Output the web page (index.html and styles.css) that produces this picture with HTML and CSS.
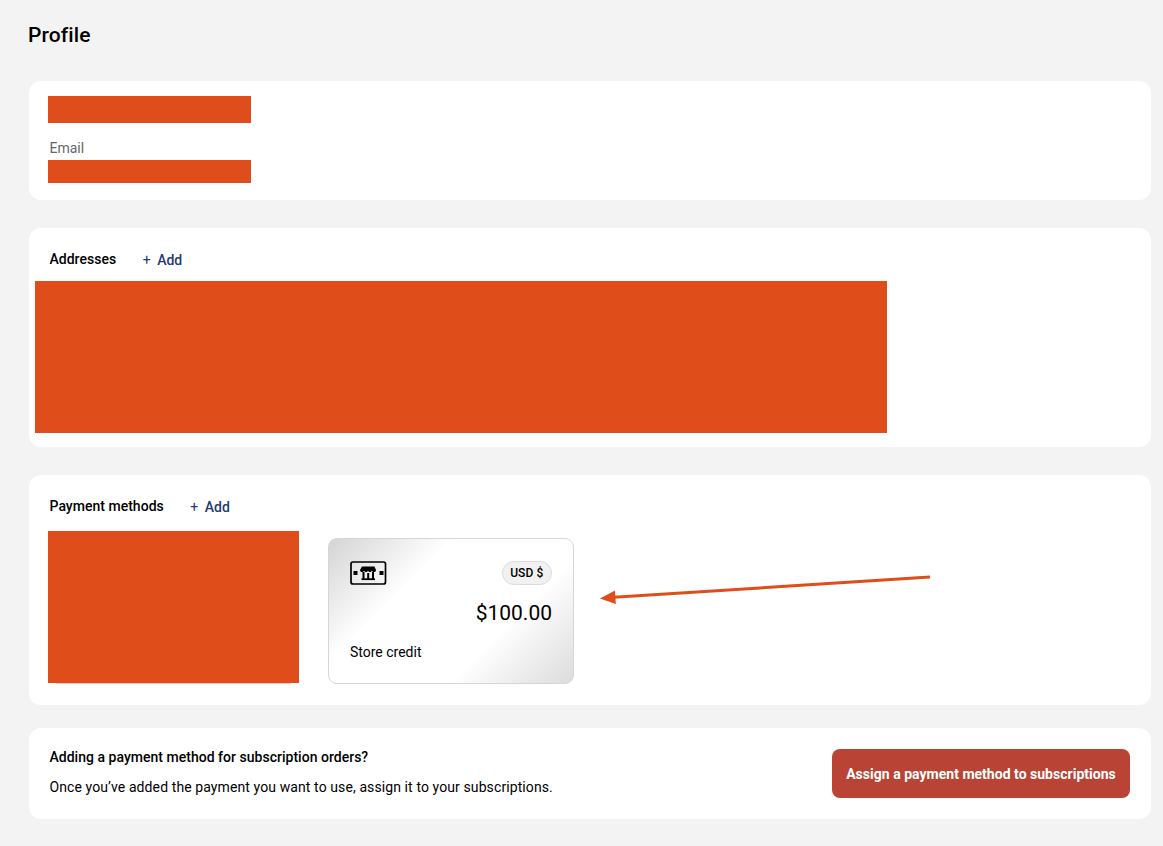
FILE: index.html
```html
<!DOCTYPE html>
<html lang="en">
<head>
<meta charset="utf-8">
<title>Profile</title>
<link rel="stylesheet" href="styles.css">
</head>
<body>
<main class="page">
  <h1 class="title">Profile</h1>

  <section class="card card-contact">
    <div class="redact redact-name"></div>
    <div class="email-label">Email</div>
    <div class="redact redact-email"></div>
  </section>

  <section class="card card-addresses">
    <div class="section-head">
      <h2 class="section-title">Addresses</h2>
      <a class="add-link"><span class="plus">+</span>Add</a>
    </div>
    <div class="redact redact-address"></div>
  </section>

  <section class="card card-payment">
    <div class="section-head section-head-pay">
      <h2 class="section-title">Payment methods</h2>
      <a class="add-link"><span class="plus">+</span>Add</a>
    </div>
    <div class="pay-row">
      <div class="pay-redaction">
        <div class="redact redact-pay"></div>
        <div class="redact-sliver"></div>
      </div>
      <div class="credit">
        <div class="credit-top">
          <svg class="credit-icon" width="37" height="24" viewBox="0 0 37 24" aria-hidden="true">
            <rect x="1" y="1" width="34.5" height="22" rx="2" fill="none" stroke="#000" stroke-width="1.7"/>
            <rect x="3.5" y="10" width="4" height="4" fill="#000"/>
            <rect x="29.5" y="10" width="4" height="4" fill="#000"/>
            <path d="M12 5.5h12.5l1.5 3.4c0 1.3-1 2.1-2 2.1s-1.6-.6-2-1.3c-.4.7-1.2 1.3-2 1.3s-1.6-.6-2-1.3c-.4.7-1.2 1.3-2 1.3s-1.6-.6-2-1.3c-.4.7-1 1.3-2 1.3s-2-.8-2-2.1z" fill="#000"/>
            <path d="M13.5 11v7M18.2 12v6M23 11v7" stroke="#000" stroke-width="2" fill="none"/>
            <path d="M11.5 18.2h13.5" stroke="#000" stroke-width="1.8" fill="none"/>
          </svg>
          <span class="currency">USD $</span>
        </div>
        <div class="amount">$100.00</div>
        <div class="credit-label">Store credit</div>
      </div>
    </div>
    <svg class="arrow" width="331" height="40" viewBox="0 0 331 40" aria-hidden="true">
      <path d="M330 2 L14 22.3" stroke="#de4d1a" stroke-width="3" fill="none"/>
      <path d="M0 23.5 L15 15.5 L15.8 29z" fill="#de4d1a"/>
    </svg>
  </section>

  <section class="card card-assign">
    <div class="assign-text">
      <h2 class="section-title">Adding a payment method for subscription orders?</h2>
      <p class="assign-copy">Once you’ve added the payment you want to use, assign it to your subscriptions.</p>
    </div>
    <button class="assign-btn" type="button">Assign a payment method to subscriptions</button>
  </section>
</main>
</body>
</html>
```
FILE: styles.css
```css
* { box-sizing: border-box; }
html, body { margin: 0; padding: 0; }
body {
  background: #f3f3f3;
  color: #000;
  font-family: Roboto, "Liberation Sans", sans-serif;
  font-size: 14px;
}
.page {
  width: 1163px;
  height: 846px;
  overflow: hidden;
  padding: 23px 12px 0 29px;
}
.title {
  margin: 0 0 34px -1px;
  font-size: 21px;
  line-height: 24px;
  font-weight: 500;
  letter-spacing: 0.1px;
}
.card {
  position: relative;
  background: #fff;
  border-radius: 12px;
}
.redact { background: #de4d1a; }
.card-contact {
  height: 119px;
  padding: 15px 19px 0;
  margin-bottom: 28px;
}
.redact-name { width: 203px; height: 27px; }
.email-label {
  margin: 17px 0 3px 1.5px;
  font-size: 14px;
  line-height: 17px;
  color: #666;
}
.redact-email { width: 203px; height: 23px; }
.card-addresses {
  height: 219px;
  padding: 21px 6px 0;
  margin-bottom: 28px;
}
.section-head {
  display: flex;
  align-items: center;
  gap: 26.5px;
  height: 20px;
  padding-left: 14.5px;
  margin-bottom: 12px;
}
.section-title {
  margin: 0;
  font-size: 14px;
  line-height: 18px;
  font-weight: 500;
  letter-spacing: 0.02px;
}
.add-link {
  display: inline-flex;
  align-items: center;
  font-size: 14px;
  line-height: 18px;
  font-weight: 500;
  color: #1f3a70;
  margin-top: 1px;
}
.plus { margin-right: 6.5px; font-weight: 400; }
.redact-address { width: 852px; height: 152px; }
.card-payment {
  height: 230px;
  padding: 21px 19px 0;
  margin-bottom: 23px;
}
.section-head-pay { padding-left: 1.5px; margin-bottom: 15px; }
.pay-row { display: flex; align-items: flex-start; gap: 29px; }
.pay-redaction { width: 251px; }
.redact-pay { height: 152px; }
.redact-sliver { height: 1px; margin: 0 8px; background: #e9c6b8; }
.credit {
  width: 246px;
  height: 146px;
  margin-top: 7px;
  padding: 21px 21px 0;
  border: 1px solid #d6d6d6;
  border-radius: 9px;
  background: linear-gradient(135deg, #d4d4d4 0%, #fff 32%, #fff 68%, #dcdcdc 100%);
}
.credit-top { display: flex; justify-content: space-between; align-items: center; }
.credit-icon { display: block; flex: none; }
.currency {
  height: 24px;
  padding: 0 7.5px;
  margin-top: 1px;
  display: inline-flex;
  align-items: center;
  font-size: 12px;
  font-weight: 500;
  letter-spacing: 0.01em;
  background: #f1f1f1;
  border: 1px solid #dcdcdc;
  border-radius: 12px;
}
.amount {
  margin-top: 15px;
  text-align: right;
  font-size: 21px;
  line-height: 26px;
}
.credit-label {
  margin-top: 17px;
  font-size: 14px;
  line-height: 18px;
}
.arrow {
  position: absolute;
  left: 571px;
  top: 100px;
}
.card-assign {
  height: 91px;
  padding: 0 21px 0 20.5px;
  display: flex;
  align-items: center;
  justify-content: space-between;
}
.assign-text { display: flex; flex-direction: column; gap: 12px; margin-top: -4px; }
.assign-copy { margin: 0; font-size: 14px; line-height: 18px; letter-spacing: 0.1px; }
.assign-btn {
  width: 298px;
  height: 49px;
  padding: 0;
  border: 0;
  border-radius: 8px;
  background: #b94335;
  color: #fff;
  font-family: inherit;
  font-size: 14px;
  font-weight: 700;
  letter-spacing: 0.02px;
}
```
